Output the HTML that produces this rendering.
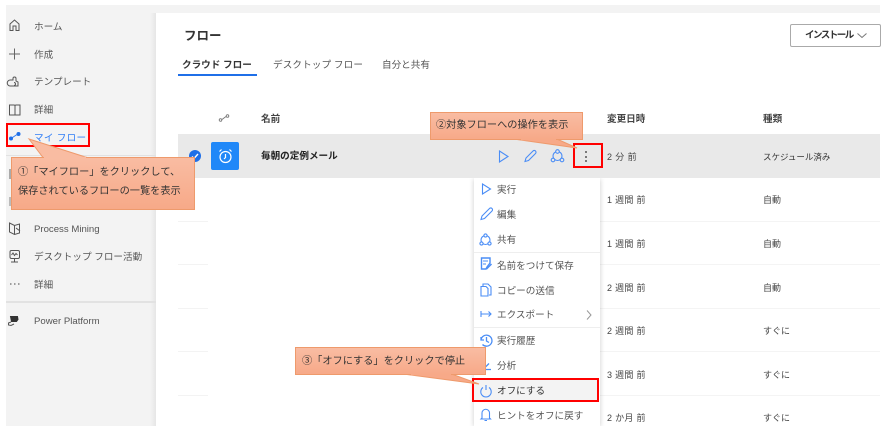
<!DOCTYPE html>
<html lang="ja"><head><meta charset="utf-8"><style>
html,body{margin:0;padding:0;background:#fff}
#p{position:relative;width:886px;height:445px;overflow:hidden;background:#fff;font-family:"Liberation Sans","Noto Sans CJK JP",sans-serif;color:#444;filter:blur(.3px)}
.a{position:absolute}
.t{position:absolute;white-space:nowrap;font-size:9.6px;line-height:14px;color:#555;margin-top:1.5px}
.b{font-weight:700;color:#333}
.call{position:absolute;background:#f8b093;background:linear-gradient(#f9bca2,#f7a988);border:1px solid #ee9a6c;box-sizing:border-box;color:#333;font-size:10.2px;white-space:nowrap}
svg{position:absolute;overflow:visible}
.sep{position:absolute;left:178px;width:30px;height:1px;background:#f3f3f3}
.r{position:absolute;border:2px solid #f00;box-sizing:border-box}
</style></head><body><div id="p">
<div class="a" style="left:6px;top:5px;width:874px;height:8px;background:#f3f3f3"></div>
<div class="a" style="left:6px;top:5px;width:150px;height:421px;background:#f3f3f3"></div>
<div class="a" style="left:150px;top:13px;width:6px;height:413px;background:linear-gradient(90deg,#f3f3f3,#e6e6e6)"></div>
<div class="a" style="left:6px;top:155px;width:150px;height:1px;background:#e2e2e2"></div>
<div class="a" style="left:6px;top:301px;width:150px;height:2px;background:#e2e2e2"></div>

<svg style="left:0;top:0" width="160" height="340" fill="none" stroke="#555" stroke-width="1">
<path d="M10 30.500V24l4.500-4 4.500 4v6.500h-3V26h-3v4.500z"/>
<path d="M9 54h11M14.500 48.500v11" stroke="#666"/>
<path d="M11 86h7v-4l-2-1v-2.500a1.500 1.500 0 0 0-3 0V80h-2.500a2 2 0 0 0-.5 6zM14 82.500a1.500 1.500 0 1 1 0 3" />
<path d="M9.500 105h4.500q1 0 1 1v9h-5.500zM15 106q0-1 1-1h4v10h-5z"/>
<path d="M9.500 223l5 2.500 5-1.500v9l-5 1.500-5-2.500zM14.500 225.500v9M16 228l4 3" />
<rect x="10" y="250.500" width="9.500" height="8" rx="1.500"/><path d="M11.500 255l1.500-2 1.500 2.500 1.500-2 1.500 1.500M14.500 258.500v3M11 262h7"/>
<path d="M10 284h1.500M14 284h1.500M18 284h1.500" stroke="#444"/>
<path d="M10.500 316.500h7l.5 3-1.500 2h-5z" fill="#333" stroke="#333"/><path d="M11 322l-2.500 1v2l2.500.5 3-1.500"/>
</svg>
<svg style="left:0;top:0" width="40" height="150"><path d="M11 138.500L17 134.500" stroke="#2b7cf6" stroke-width="1"/><circle cx="11" cy="138.500" r="2" fill="#1f6fe8"/><circle cx="18.500" cy="134" r="2" fill="#1f6fe8"/></svg>

<div class="t" style="left:34px;top:19px">ホーム</div>
<div class="t" style="left:34px;top:47px">作成</div>
<div class="t" style="left:34px;top:74px">テンプレート</div>
<div class="t" style="left:34px;top:102px">詳細</div>
<div class="t" style="left:34px;top:130px;color:#2f7df6;letter-spacing:.3px">マイ フロー</div>
<div class="t" style="left:34px;top:221px">Process Mining</div>
<div class="t" style="left:34px;top:249px">デスクトップ フロー活動</div>
<div class="t" style="left:34px;top:277px">詳細</div>
<div class="t" style="left:34px;top:313px">Power Platform</div>
<div class="a" style="left:9px;top:169px;width:2px;height:10px;background:#aaa"></div>
<div class="a" style="left:9px;top:197px;width:2px;height:9px;background:#bbb"></div>

<div class="t b" style="left:184px;top:26px;font-size:12.500px;line-height:16px">フロー</div>
<div class="t b" style="left:182px;top:57px;font-size:9.600px">クラウド フロー</div>
<div class="t" style="left:273px;top:57px;letter-spacing:.1px">デスクトップ フロー</div>
<div class="t" style="left:382px;top:57px">自分と共有</div>
<div class="a" style="left:178px;top:74px;width:79px;height:2px;background:#1f6fe8"></div>

<div class="a" style="left:790px;top:24px;width:91px;height:23px;box-sizing:border-box;border:1px solid #aaa;border-radius:2px;background:#fff"></div>
<div class="t b" style="left:805px;top:27.500px;font-size:9.500px;letter-spacing:-1.500px">インストール</div>
<svg style="left:857px;top:33px" width="12" height="7" fill="none" stroke="#777"><path d="M.5 .5l4.500 4 4.500-4"/></svg>

<svg style="left:218px;top:114px" width="14" height="8" fill="none" stroke="#777" stroke-width=".9"><circle cx="2.500" cy="6" r="1.300"/><circle cx="9.500" cy="2" r="1.300"/><path d="M4 5.500l4-3"/></svg>
<div class="t b" style="left:261px;top:111px;color:#444">名前</div>
<div class="t b" style="left:607px;top:111px;color:#444">変更日時</div>
<div class="t b" style="left:763px;top:111px;color:#444">種類</div>

<div class="a" style="left:178px;top:134px;width:702px;height:44px;background:#e9e9e9"></div>
<div class="a" style="left:189px;top:150px;width:12px;height:12px;border-radius:50%;background:#1f6fe8"></div>
<svg style="left:189px;top:150px" width="12" height="12" fill="none" stroke="#fff" stroke-width="1.400"><path d="M3 6.500l2 2 4-4.500"/></svg>
<div class="a" style="left:211px;top:142px;width:28px;height:28px;border-radius:2px;background:#2088f8"></div>
<svg style="left:218px;top:148px" width="15" height="16" fill="none" stroke="#fff" stroke-width="1.200"><circle cx="7.500" cy="9" r="5.500"/><path d="M7.500 6v3.500l-1.500 1.500M1.500 3.500l2-2M13.500 3.500l-2-2"/></svg>
<div class="t b" style="left:261px;top:148px;font-size:9.600px;color:#222">毎朝の定例メール</div>
<div class="t" style="left:607px;top:148px;letter-spacing:.4px;font-size:9px;color:#444">2 分 前</div>
<div class="t" style="left:763px;top:148px;font-size:8.500px;color:#333">スケジュール済み</div>

<svg style="left:0;top:0" width="600" height="180" fill="none" stroke="#4a8df6" stroke-width="1.100">
<path d="M499.500 151v11l8.500-5.500z"/>
<path d="M525 161.500l1-3.500 7-7a1.500 1.500 0 0 1 2.500 2.500l-7 7z"/>
<circle cx="557.500" cy="156" r="4.500"/><circle cx="557.500" cy="151.500" r="1.800" fill="#e9e9e9"/><circle cx="553" cy="160" r="1.800" fill="#e9e9e9"/><circle cx="562" cy="160" r="1.800" fill="#e9e9e9"/>
</svg>
<div class="a" style="left:585px;top:151px;width:2px;height:2px;background:#555;border-radius:1px"></div>
<div class="a" style="left:585px;top:155.500px;width:2px;height:2px;background:#555;border-radius:1px"></div>
<div class="a" style="left:585px;top:160px;width:2px;height:2px;background:#555;border-radius:1px"></div>
<div class="r" style="left:573px;top:143px;width:30px;height:25px"></div>

<div class="sep" style="top:221px"></div><div class="sep" style="top:264px"></div><div class="sep" style="top:308px"></div><div class="sep" style="top:351px"></div><div class="sep" style="top:395px"></div>
<div class="a" style="left:600px;top:221px;width:280px;height:1px;background:#f4f4f4"></div>
<div class="a" style="left:600px;top:264px;width:280px;height:1px;background:#f4f4f4"></div>
<div class="a" style="left:600px;top:308px;width:280px;height:1px;background:#f4f4f4"></div>
<div class="a" style="left:600px;top:351px;width:280px;height:1px;background:#f4f4f4"></div>
<div class="a" style="left:600px;top:395px;width:280px;height:1px;background:#f4f4f4"></div>

<div class="t" style="left:607px;top:191px;font-size:9px;letter-spacing:.3px;color:#444">1 週間 前</div>
<div class="t" style="left:607px;top:235px;font-size:9px;letter-spacing:.3px;color:#444">1 週間 前</div>
<div class="t" style="left:607px;top:279px;font-size:9px;letter-spacing:.3px;color:#444">2 週間 前</div>
<div class="t" style="left:607px;top:322px;font-size:9px;letter-spacing:.3px;color:#444">2 週間 前</div>
<div class="t" style="left:607px;top:366px;font-size:9px;letter-spacing:.3px;color:#444">3 週間 前</div>
<div class="t" style="left:607px;top:409px;font-size:9px;letter-spacing:.3px;color:#444">2 か月 前</div>
<div class="t" style="left:763px;top:191px;font-size:9px;color:#444">自動</div>
<div class="t" style="left:763px;top:235px;font-size:9px;color:#444">自動</div>
<div class="t" style="left:763px;top:279px;font-size:9px;color:#444">自動</div>
<div class="t" style="left:763px;top:322px;font-size:9px;color:#444">すぐに</div>
<div class="t" style="left:763px;top:366px;font-size:9px;color:#444">すぐに</div>
<div class="t" style="left:763px;top:409px;font-size:9px;color:#444">すぐに</div>

<div class="a" style="left:474px;top:178px;width:126px;height:248px;background:#fff;box-shadow:0 1px 5px rgba(0,0,0,.2);clip-path:inset(0 -8px 0 -8px)"></div>
<div class="a" style="left:474px;top:252px;width:126px;height:1px;background:#eee"></div>
<div class="a" style="left:474px;top:327px;width:126px;height:1px;background:#eee"></div>
<div class="t" style="left:497px;top:182px">実行</div>
<div class="t" style="left:497px;top:207px">編集</div>
<div class="t" style="left:497px;top:232px">共有</div>
<div class="t" style="left:497px;top:258px">名前をつけて保存</div>
<div class="t" style="left:497px;top:283px">コピーの送信</div>
<div class="t" style="left:497px;top:307px">エクスポート</div>
<div class="t" style="left:497px;top:333px">実行履歴</div>
<div class="t" style="left:497px;top:358px">分析</div>
<div class="a" style="left:474px;top:379px;width:124px;height:22px;background:#f3f3f3"></div>
<div class="t" style="left:497px;top:383px;color:#333">オフにする</div>
<div class="t" style="left:497px;top:408px">ヒントをオフに戻す</div>
<svg style="left:0;top:0" width="600" height="430" fill="none" stroke="#4a8df6" stroke-width="1.100">
<path d="M482.500 184v10l8-5z"/>
<path d="M481 219.500l1-3.500 7.500-7.500a1.500 1.500 0 0 1 2.500 2.500l-7.500 7.500z"/>
<circle cx="485.500" cy="240" r="4.500"/><circle cx="485.500" cy="235.500" r="1.600" fill="#fff"/><circle cx="481.500" cy="243.500" r="1.600" fill="#fff"/><circle cx="489.500" cy="243.500" r="1.600" fill="#fff"/>
<path d="M481.500 269v-11h8.500v5l-3 4-1 2z" stroke-width="1.400"/><path d="M483 261h5M483 264h3" stroke-width="1"/><path d="M486.500 269l5-5" stroke-width="1.500"/>
<path d="M483 286v-2h5l3 3v8h-2M481 286.500h5l2 2v7.500h-7z"/>
<path d="M481 311v6M481 314h10M488.500 311.500l2.500 2.500-2.500 2.500"/>
<path d="M481 340a5.500 5.500 0 1 1 1.500 4.500M486.500 337v4l2.500 1.500M481 337v3h3" stroke-width="1.300"/>
<path d="M481 369.500h10M482 366l3 1.500 4-4" stroke-width="1.300"/>
<path d="M483 387.500a5.200 5.200 0 1 0 6 0M486 385v5"/>
<path d="M482 418v-5a3.700 3.700 0 0 1 7.500 0v5l1 1h-9.500zM484.500 420.500h2.500"/>
</svg>
<svg style="left:586px;top:310px" width="7" height="10" fill="none" stroke="#999"><path d="M1 .5l4 4.500-4 4.500"/></svg>
<div class="a" style="left:470px;top:426px;width:134px;height:19px;background:#fff"></div>

<div class="r" style="left:6px;top:123px;width:84px;height:24px"></div>
<div class="r" style="left:472px;top:378px;width:127px;height:24px"></div>

<svg style="left:0;top:0" width="886" height="445">
<path d="M29 139L43 157.500H87z" fill="#f9bca2" stroke="#ee9a6c"/>
<path d="M577 148L517 139.500H558z" fill="#f7a988" stroke="#ee9a6c"/>
<path d="M479 384L407 374.500H453z" fill="#f7a988" stroke="#ee9a6c"/>
</svg>
<div class="call" style="left:11px;top:157px;width:184px;height:53px">
<div style="position:absolute;left:6px;top:6.500px;line-height:15px">①「マイフロー」をクリックして、</div>
<div style="position:absolute;left:6px;top:25.500px;line-height:15px">保存されているフローの一覧を表示</div></div>
<div class="call" style="left:430px;top:112px;width:153px;height:28px"><div style="position:absolute;left:5px;top:5px;line-height:15px">②対象フローへの操作を表示</div></div>
<div class="call" style="left:295px;top:347px;width:191px;height:28px"><div style="position:absolute;left:6px;top:5.500px;line-height:15px">③「オフにする」をクリックで停止</div></div>
<svg style="left:0;top:0" width="886" height="445">
<path d="M44 157.500H86" stroke="#f9bca2" stroke-width="1.500"/>
<path d="M521 139.500H556" stroke="#f7a988" stroke-width="1.500"/>
<path d="M411 374.500H451" stroke="#f7a988" stroke-width="1.500"/>
</svg>
</div></body></html>
